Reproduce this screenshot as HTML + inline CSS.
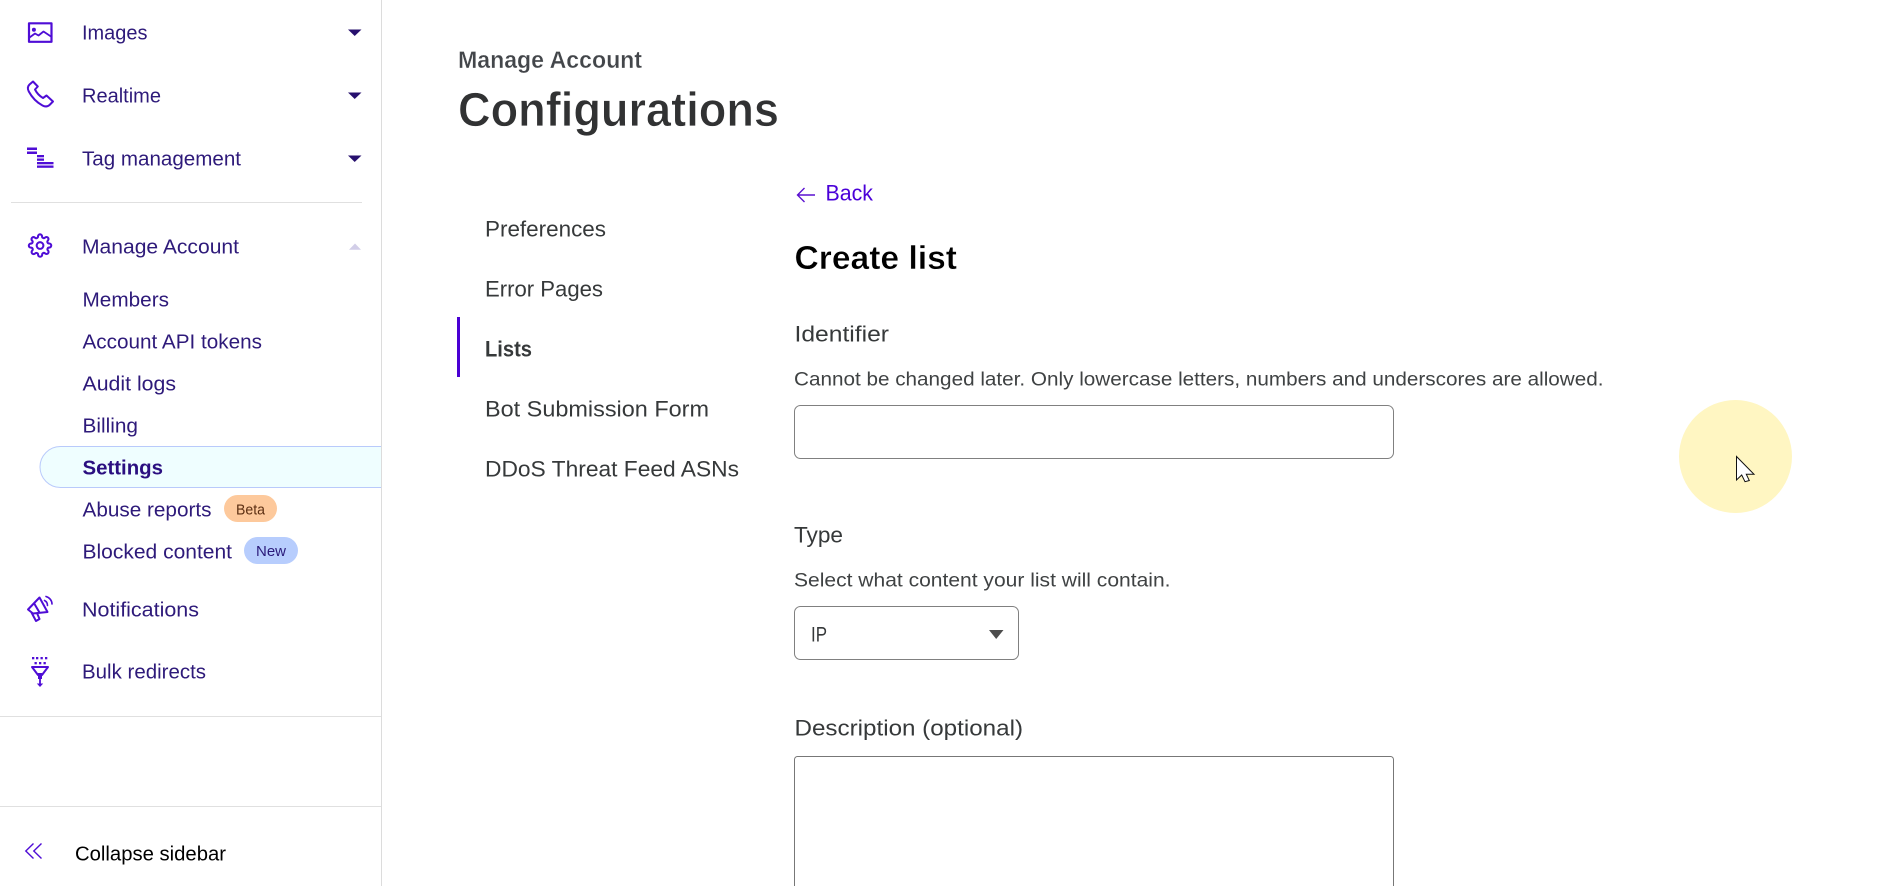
<!DOCTYPE html>
<html lang="en">
<head>
<meta charset="utf-8">
<title>Configurations</title>
<style>
html,body{margin:0;padding:0;width:1886px;height:886px;overflow:hidden;background:#fff}
svg{display:block;position:absolute;left:0;top:0}
text{font-family:"Liberation Sans",sans-serif}
.s{font-size:20.5px;fill:#2e1a7a}
.m{font-size:22px;fill:#36393a}
.d{font-size:19.5px;fill:#3f4243}
.i{fill:none;stroke:#4f0dd6;stroke-linejoin:round;stroke-linecap:round}
</style>
</head>
<body>
<svg width="1886" height="886" viewBox="0 0 1886 886" xmlns="http://www.w3.org/2000/svg">
<rect width="1886" height="886" fill="#fff"/>
<!-- Sidebar structure -->
<rect x="381" y="0" width="1" height="886" fill="#dcdcdc"/>
<rect x="11" y="202" width="351" height="1" fill="#e0e0e0"/>
<rect x="0" y="716" width="381" height="1" fill="#e0e0e0"/>
<rect x="0" y="806" width="381" height="1" fill="#e0e0e0"/>
<path d="M381 446.500H60.500a20.500 20.500 0 0 0 0 41H381" fill="#effeff" stroke="#b9cafb" stroke-width="1"/>

<!-- Sidebar icons -->
<rect class="i" x="29" y="23.300" width="22.500" height="18.500" stroke-width="2.200" stroke-linejoin="miter"/>
<circle cx="33.900" cy="29.800" r="2" fill="#4f0dd6"/>
<path class="i" stroke-width="1.800" d="M29.500 37.500L35 33.500L38.500 35.500L43.500 31.500L51 36.500"/>

<path class="i" stroke-width="2" d="M33 81.500L29.500 84.500C27.500 86.500 27.500 89 28.800 91.500C32 97.500 37 102.500 42.500 105.500C45 106.800 47.500 106.800 49.500 105L53 101.500L46.500 95.500L43 98C39.500 96 37 93.500 35 89.500L37.800 86.500Z"/>

<g fill="#4f0dd6">
<rect x="27" y="147.500" width="10" height="2.500"/><rect x="27" y="151.500" width="10" height="2.500"/>
<rect x="37" y="155" width="7" height="2.300"/><rect x="37" y="158.500" width="7" height="2.300"/>
<rect x="37" y="162" width="16.500" height="2.300"/><rect x="37" y="165.500" width="16.500" height="2.300"/>
</g>

<g transform="translate(27.800 233.300) scale(1.020)">
<circle class="i" cx="12" cy="12" r="3.300" stroke-width="2"/>
<path class="i" stroke-width="2" d="M19.400 15a1.650 1.650 0 0 0 .33 1.820l.06.06a2 2 0 0 1 0 2.830 2 2 0 0 1-2.830 0l-.06-.06a1.650 1.650 0 0 0-1.820-.33 1.650 1.650 0 0 0-1 1.510V21a2 2 0 0 1-2 2 2 2 0 0 1-2-2v-.09A1.650 1.650 0 0 0 9 19.400a1.650 1.650 0 0 0-1.820.33l-.06.06a2 2 0 0 1-2.830 0 2 2 0 0 1 0-2.830l.06-.06a1.650 1.650 0 0 0 .33-1.820 1.650 1.650 0 0 0-1.510-1H3a2 2 0 0 1-2-2 2 2 0 0 1 2-2h.09A1.650 1.650 0 0 0 4.600 9a1.650 1.650 0 0 0-.33-1.820l-.06-.06a2 2 0 0 1 0-2.830 2 2 0 0 1 2.830 0l.06.06a1.650 1.650 0 0 0 1.820.33H9a1.650 1.650 0 0 0 1-1.510V3a2 2 0 0 1 2-2 2 2 0 0 1 2 2v.09a1.650 1.650 0 0 0 1 1.510 1.650 1.650 0 0 0 1.820-.33l.06-.06a2 2 0 0 1 2.830 0 2 2 0 0 1 0 2.830l-.06.06a1.650 1.650 0 0 0-.33 1.820V9a1.650 1.650 0 0 0 1.510 1H21a2 2 0 0 1 2 2 2 2 0 0 1-2 2h-.09a1.650 1.650 0 0 0-1.510 1z"/>
</g>

<path class="i" stroke-width="2" d="M39.500 597.500L47.500 612L33 613.500L28 609.500Z M34.500 604L39.500 612.500 M31.500 612.500L36 621L39.500 619L37 613"/>
<path class="i" stroke-width="1.600" d="M44.500 600.500C46.500 601.500 47.500 603 47.500 605.500 M46 596.500C49.500 597.500 52 600.500 52 604"/>

<g fill="#4f0dd6">
<rect x="32" y="657" width="2.300" height="2.300"/><rect x="36" y="657" width="2.300" height="2.300"/><rect x="40.500" y="657" width="2.300" height="2.300"/><rect x="45" y="657" width="2.300" height="2.300"/>
<rect x="34.500" y="662" width="2.300" height="2.300"/><rect x="39" y="662" width="2.300" height="2.300"/><rect x="43.500" y="662" width="2.300" height="2.300"/>
<rect x="38" y="673" width="4" height="6"/>
<rect x="39.100" y="679" width="1.800" height="5"/>
<path d="M36.800 683.500h6.400L40 687Z"/>
</g>
<path class="i" stroke-width="2" d="M32 667H48L42 675H38Z"/>

<path fill="none" stroke="#4f0dd6" stroke-width="1.400" d="M33.500 843.500L25.800 851L33.500 858.500 M41.500 843.500L33.800 851L41.500 858.500"/>

<!-- Carets -->
<g fill="#27106e">
<path d="M348 29.500H361.500L354.700 36Z"/>
<path d="M348 92.500H361.500L354.700 99Z"/>
<path d="M348 155.500H361.500L354.700 162Z"/>
</g>
<path d="M349 249.800H361L355 243.500Z" fill="#d2cee8"/>

<!-- Sidebar text -->
<text class="s" x="82" y="39.500" textLength="65.500" lengthAdjust="spacingAndGlyphs">Images</text>
<text class="s" x="82" y="102.500" textLength="79" lengthAdjust="spacingAndGlyphs">Realtime</text>
<text class="s" x="82" y="165.500" textLength="159" lengthAdjust="spacingAndGlyphs">Tag management</text>
<text class="s" x="82" y="253.500" textLength="157" lengthAdjust="spacingAndGlyphs">Manage Account</text>
<text class="s" x="82.500" y="306.500" textLength="86.500" lengthAdjust="spacingAndGlyphs">Members</text>
<text class="s" x="82.500" y="348.500" textLength="179.500" lengthAdjust="spacingAndGlyphs">Account API tokens</text>
<text class="s" x="82.500" y="390.500" textLength="93.500" lengthAdjust="spacingAndGlyphs">Audit logs</text>
<text class="s" x="82.500" y="432.500" textLength="55.500" lengthAdjust="spacingAndGlyphs">Billing</text>
<text class="s" x="82.500" y="474.500" textLength="80.500" lengthAdjust="spacingAndGlyphs" style="font-weight:700;fill:#2b0f80">Settings</text>
<text class="s" x="82.500" y="516.500" textLength="129" lengthAdjust="spacingAndGlyphs">Abuse reports</text>
<text class="s" x="82.500" y="558.500" textLength="149.500" lengthAdjust="spacingAndGlyphs">Blocked content</text>
<text class="s" x="82" y="616.500" textLength="117" lengthAdjust="spacingAndGlyphs">Notifications</text>
<text class="s" x="82" y="678.500" textLength="124" lengthAdjust="spacingAndGlyphs">Bulk redirects</text>
<text x="75" y="860.500" textLength="151" lengthAdjust="spacingAndGlyphs" style="font-size:20.500px;fill:#000">Collapse sidebar</text>

<!-- Badges -->
<rect x="224" y="495" width="53" height="27" rx="13.500" fill="#fdc99c"/>
<text x="236" y="514.500" textLength="29" lengthAdjust="spacingAndGlyphs" style="font-size:15px;fill:#5c2f12">Beta</text>
<rect x="244" y="537" width="54" height="27" rx="13.500" fill="#b7cdfd"/>
<text x="256" y="556" textLength="30" lengthAdjust="spacingAndGlyphs" style="font-size:15px;fill:#2a1a7a">New</text>

<!-- Header -->
<text x="458" y="68" textLength="184" lengthAdjust="spacingAndGlyphs" style="font-size:24px;font-weight:700;fill:#43464a;stroke:#fff;stroke-width:.3px">Manage Account</text>
<text x="458" y="126" textLength="321" lengthAdjust="spacingAndGlyphs" style="font-size:48px;font-weight:700;fill:#313233;stroke:#fff;stroke-width:.7px">Configurations</text>

<!-- Left tabs -->
<rect x="457" y="317" width="3" height="60" fill="#4a00d4"/>
<text class="m" x="485" y="236.500" textLength="121" lengthAdjust="spacingAndGlyphs">Preferences</text>
<text class="m" x="485" y="296.500" textLength="118" lengthAdjust="spacingAndGlyphs">Error Pages</text>
<text class="m" x="485" y="356.500" textLength="47" lengthAdjust="spacingAndGlyphs" style="font-weight:700">Lists</text>
<text class="m" x="485" y="416.500" textLength="224" lengthAdjust="spacingAndGlyphs">Bot Submission Form</text>
<text class="m" x="485" y="476.500" textLength="254" lengthAdjust="spacingAndGlyphs">DDoS Threat Feed ASNs</text>

<!-- Form -->
<path d="M815 195H797.500M804.500 188L797.500 195L804.500 202" fill="none" stroke="#5a10d0" stroke-width="1.400"/>
<text x="825.500" y="200.500" textLength="47.500" lengthAdjust="spacingAndGlyphs" style="font-size:22.500px;fill:#4a00d8">Back</text>
<text x="794.500" y="269" textLength="162.500" lengthAdjust="spacingAndGlyphs" style="font-size:33px;font-weight:700;fill:#000;stroke:#fff;stroke-width:.4px">Create list</text>

<text class="m" x="794.500" y="341.500" textLength="94.500" lengthAdjust="spacingAndGlyphs">Identifier</text>
<text class="d" x="794" y="385.500" textLength="809.500" lengthAdjust="spacingAndGlyphs">Cannot be changed later. Only lowercase letters, numbers and underscores are allowed.</text>
<rect x="794.500" y="405.500" width="599" height="53" rx="6" fill="#fff" stroke="#808080"/>

<text class="m" x="794" y="542.500" textLength="49" lengthAdjust="spacingAndGlyphs">Type</text>
<text class="d" x="794" y="586.500" textLength="376.500" lengthAdjust="spacingAndGlyphs">Select what content your list will contain.</text>
<rect x="794.500" y="606.500" width="224" height="53" rx="6" fill="#fff" stroke="#808080"/>
<text x="811" y="641.500" textLength="16" lengthAdjust="spacingAndGlyphs" style="font-size:21px;fill:#36393a">IP</text>
<path d="M989 630H1003.500L996.200 639Z" fill="#4d4d4d"/>

<text class="m" x="794.500" y="735.500" textLength="228.500" lengthAdjust="spacingAndGlyphs">Description (optional)</text>
<path d="M794.500 900V759.500a3 3 0 0 1 3-3H1390.500a3 3 0 0 1 3 3V900" fill="#fff" stroke="#777"/>

<!-- Cursor highlight -->
<circle cx="1735.500" cy="456.500" r="56.500" fill="#fff6c2"/>
<path d="M1736.500 456.500V480L1741.700 475L1745 481.700L1749.300 480.500L1746.300 474.300H1754Z" fill="#fff" stroke="#111" stroke-width="1"/>
</svg>
</body>
</html>
